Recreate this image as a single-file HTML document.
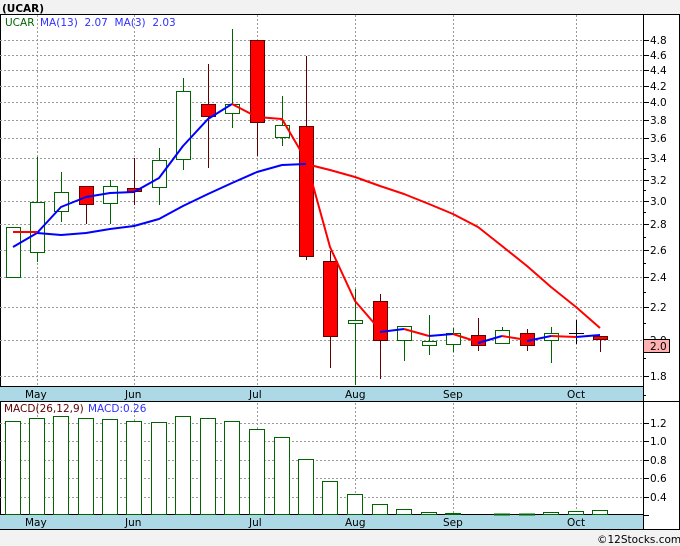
<!DOCTYPE html>
<html><head><style>
body{margin:0;width:680px;height:546px;overflow:hidden;background:#f2f2f2;font-family:"Liberation Sans","DejaVu Sans",sans-serif}
svg{display:block}
text{font-family:"DejaVu Sans","Liberation Sans",sans-serif;font-size:10.5px}
</style></head><body>
<svg width="680" height="546" viewBox="0 0 680 546">
<rect width="680" height="546" fill="#f2f2f2"/>
<text x="2" y="12" font-size="13" font-weight="bold" fill="#000">(UCAR)</text>
<rect x="0.5" y="14.5" width="679" height="515" fill="#fff" stroke="#000"/>
<line x1="0" y1="401.5" x2="680" y2="401.5" stroke="#000"/>
<line x1="643.5" y1="14" x2="643.5" y2="530" stroke="#000"/>
<g stroke="#999" stroke-dasharray="2,2" stroke-width="1">
<line x1="37.5" y1="15" x2="37.5" y2="530"/><line x1="134.5" y1="15" x2="134.5" y2="530"/><line x1="257.5" y1="15" x2="257.5" y2="530"/><line x1="355.5" y1="15" x2="355.5" y2="530"/><line x1="453.5" y1="15" x2="453.5" y2="530"/><line x1="576.5" y1="15" x2="576.5" y2="530"/>
<line x1="0" y1="40.5" x2="643" y2="40.5"/><line x1="0" y1="55.5" x2="643" y2="55.5"/><line x1="0" y1="70.5" x2="643" y2="70.5"/><line x1="0" y1="86.5" x2="643" y2="86.5"/><line x1="0" y1="102.5" x2="643" y2="102.5"/><line x1="0" y1="120.5" x2="643" y2="120.5"/><line x1="0" y1="138.5" x2="643" y2="138.5"/><line x1="0" y1="158.5" x2="643" y2="158.5"/><line x1="0" y1="180.5" x2="643" y2="180.5"/><line x1="0" y1="201.5" x2="643" y2="201.5"/><line x1="0" y1="224.5" x2="643" y2="224.5"/><line x1="0" y1="250.5" x2="643" y2="250.5"/><line x1="0" y1="277.5" x2="643" y2="277.5"/><line x1="0" y1="307.5" x2="643" y2="307.5"/><line x1="0" y1="340.5" x2="643" y2="340.5"/><line x1="0" y1="376.5" x2="643" y2="376.5"/>
<line x1="0" y1="423.5" x2="643" y2="423.5"/><line x1="0" y1="441.5" x2="643" y2="441.5"/><line x1="0" y1="460.5" x2="643" y2="460.5"/><line x1="0" y1="478.5" x2="643" y2="478.5"/><line x1="0" y1="497.5" x2="643" y2="497.5"/>
</g>
<g stroke="#000">
<line x1="643" y1="40.5" x2="649" y2="40.5"/><line x1="643" y1="55.5" x2="649" y2="55.5"/><line x1="643" y1="70.5" x2="649" y2="70.5"/><line x1="643" y1="86.5" x2="649" y2="86.5"/><line x1="643" y1="102.5" x2="649" y2="102.5"/><line x1="643" y1="120.5" x2="649" y2="120.5"/><line x1="643" y1="138.5" x2="649" y2="138.5"/><line x1="643" y1="158.5" x2="649" y2="158.5"/><line x1="643" y1="180.5" x2="649" y2="180.5"/><line x1="643" y1="201.5" x2="649" y2="201.5"/><line x1="643" y1="224.5" x2="649" y2="224.5"/><line x1="643" y1="250.5" x2="649" y2="250.5"/><line x1="643" y1="277.5" x2="649" y2="277.5"/><line x1="643" y1="307.5" x2="649" y2="307.5"/><line x1="643" y1="376.5" x2="649" y2="376.5"/>
<line x1="643" y1="423.5" x2="649" y2="423.5"/><line x1="643" y1="441.5" x2="649" y2="441.5"/><line x1="643" y1="460.5" x2="649" y2="460.5"/><line x1="643" y1="478.5" x2="649" y2="478.5"/><line x1="643" y1="497.5" x2="649" y2="497.5"/><line x1="643" y1="515.5" x2="649" y2="515.5"/>
<line x1="643" y1="169.5" x2="646" y2="169.5"/><line x1="643" y1="190.5" x2="646" y2="190.5"/><line x1="643" y1="212.5" x2="646" y2="212.5"/><line x1="643" y1="237.5" x2="646" y2="237.5"/><line x1="643" y1="263.5" x2="646" y2="263.5"/><line x1="643" y1="292.5" x2="646" y2="292.5"/><line x1="643" y1="323.5" x2="646" y2="323.5"/><line x1="643" y1="358.5" x2="646" y2="358.5"/><line x1="643" y1="395.5" x2="646" y2="395.5"/>
</g>
<g fill="#000">
<text x="650" y="44">4.8</text><text x="650" y="59">4.6</text><text x="650" y="74">4.4</text><text x="650" y="90">4.2</text><text x="650" y="106">4.0</text><text x="650" y="124">3.8</text><text x="650" y="142">3.6</text><text x="650" y="162">3.4</text><text x="650" y="184">3.2</text><text x="650" y="205">3.0</text><text x="650" y="228">2.8</text><text x="650" y="254">2.6</text><text x="650" y="281">2.4</text><text x="650" y="311">2.2</text><text x="650" y="344">2.0</text><text x="650" y="380">1.8</text>
<text x="650" y="427">1.2</text><text x="650" y="445">1.0</text><text x="650" y="464">0.8</text><text x="650" y="482">0.6</text><text x="650" y="501">0.4</text>
</g>
<rect x="643.5" y="339.5" width="26" height="13" fill="#ffb0b0" stroke="#000"/>
<text x="650" y="350" fill="#000">2.0</text>
<!-- bands -->
<rect x="0" y="387" width="643" height="14" fill="#add8e6"/><line x1="0" y1="386.5" x2="643" y2="386.5" stroke="#000"/>
<rect x="0" y="515" width="643" height="14" fill="#add8e6"/><line x1="0" y1="514.5" x2="643" y2="514.5" stroke="#000"/>
<g fill="#000"><text x="25" y="398">May</text><text x="125" y="398">Jun</text><text x="249" y="398">Jul</text><text x="345" y="398">Aug</text><text x="443" y="398">Sep</text><text x="567" y="398">Oct</text>
<text x="25" y="526">May</text><text x="125" y="526">Jun</text><text x="249" y="526">Jul</text><text x="345" y="526">Aug</text><text x="443" y="526">Sep</text><text x="567" y="526">Oct</text></g>
<text x="5" y="26" font-size="10" fill="#006400">UCAR</text><text x="40" y="26" font-size="10" fill="#3030ff">MA(13)&#160; 2.07&#160; MA(3)&#160; 2.03</text>
<text x="4" y="412" font-size="10" fill="#600000">MACD(26,12,9)</text><text x="88" y="412" font-size="10" fill="#3030ff">MACD:0.26</text>
<!-- candles -->
<g stroke-width="1">
<g stroke="#006400" fill="#fff">
<line x1="37.5" y1="157" x2="37.5" y2="262"/><line x1="61.5" y1="172" x2="61.5" y2="222"/><line x1="110.5" y1="180" x2="110.5" y2="224"/><line x1="159.5" y1="148" x2="159.5" y2="205"/><line x1="183.5" y1="78" x2="183.5" y2="170"/><line x1="232.5" y1="29" x2="232.5" y2="128"/><line x1="282.5" y1="96" x2="282.5" y2="146"/><line x1="355.5" y1="289" x2="355.5" y2="385"/><line x1="404.5" y1="326" x2="404.5" y2="361"/><line x1="429.5" y1="315" x2="429.5" y2="355"/><line x1="453.5" y1="328" x2="453.5" y2="352"/><line x1="502.5" y1="327" x2="502.5" y2="344"/><line x1="551.5" y1="327" x2="551.5" y2="363"/>
<rect x="6.5" y="227.5" width="14" height="50"/><rect x="30.5" y="202.5" width="14" height="50"/><rect x="54.5" y="192.5" width="14" height="19"/><rect x="103.5" y="186.5" width="14" height="17"/><rect x="152.5" y="160.5" width="14" height="27"/><rect x="176.5" y="91.5" width="14" height="68"/><rect x="225.5" y="104.5" width="14" height="9"/><rect x="275.5" y="125.5" width="14" height="12"/><rect x="348.5" y="320.5" width="14" height="3"/><rect x="397.5" y="326.5" width="14" height="14"/><rect x="422.5" y="341.5" width="14" height="4"/><rect x="446.5" y="333.5" width="14" height="11"/><rect x="495.5" y="330.5" width="14" height="13"/><rect x="544.5" y="333.5" width="14" height="7"/>
</g>
<g stroke="#600000" fill="#ff0000">
<line x1="86.5" y1="186" x2="86.5" y2="224"/><line x1="134.5" y1="158" x2="134.5" y2="205"/><line x1="208.5" y1="64" x2="208.5" y2="168"/><line x1="257.5" y1="40" x2="257.5" y2="156"/><line x1="306.5" y1="56" x2="306.5" y2="260"/><line x1="330.5" y1="251" x2="330.5" y2="368"/><line x1="380.5" y1="294" x2="380.5" y2="379"/><line x1="478.5" y1="318" x2="478.5" y2="351"/><line x1="527.5" y1="329" x2="527.5" y2="351"/><line x1="600.5" y1="336" x2="600.5" y2="352"/>
<rect x="79.5" y="186.5" width="14" height="18"/><rect x="127.5" y="188.5" width="14" height="3"/><rect x="201.5" y="104.5" width="14" height="12"/><rect x="250.5" y="40.5" width="14" height="82"/><rect x="299.5" y="126.5" width="14" height="130"/><rect x="323.5" y="261.5" width="14" height="75"/><rect x="373.5" y="301.5" width="14" height="39"/><rect x="471.5" y="335.5" width="14" height="10"/><rect x="520.5" y="333.5" width="14" height="12"/><rect x="593.5" y="336.5" width="14" height="3"/>
</g>
<g stroke="#000"><line x1="576.5" y1="320" x2="576.5" y2="344"/><line x1="569" y1="333.5" x2="584" y2="333.5"/></g>
</g>
<!-- MA lines -->
<g fill="none" stroke-width="2" stroke-linejoin="round">
<polyline stroke="#0000ff" points="13,247 37,233 61,207 86,197 110,193 134,192 159,178 183,146 208,119 232,104"/>
<polyline stroke="#ff0000" points="232,104 257,117 282,119 306,160 330,247 355,301 380,330"/>
<polyline stroke="#ff0000" points="13,232 37,232"/>
<polyline stroke="#0000ff" points="37,233 61,235 86,233 110,229 134,226 159,219 183,206 208,194 232,183 257,172 282,165 306,164"/>
<polyline stroke="#ff0000" points="306,164 330,170 355,177 380,186 404,194 429,204 453,214 478,227 502,246 527,266 551,287 576,307 600,328"/>
<polyline stroke="#0000ff" points="380,332 404,329"/><polyline stroke="#ff0000" points="404,329 429,336"/>
<polyline stroke="#0000ff" points="429,336 453,334"/><polyline stroke="#ff0000" points="453,334 478,342"/>
<polyline stroke="#0000ff" points="478,343 502,336"/><polyline stroke="#ff0000" points="502,336 527,340"/>
<polyline stroke="#0000ff" points="527,341 551,336"/><polyline stroke="#ff0000" points="551,336 576,337"/>
<polyline stroke="#0000ff" points="576,337 600,335"/>
</g>
<!-- MACD bars -->
<g stroke="#006400" fill="#fff">
<rect x="5.5" y="421.5" width="15" height="93"/><rect x="29.5" y="418.5" width="15" height="96"/><rect x="53.5" y="416.5" width="15" height="98"/><rect x="78.5" y="418.5" width="15" height="96"/><rect x="102.5" y="419.5" width="15" height="95"/><rect x="126.5" y="421.5" width="15" height="93"/><rect x="151.5" y="422.5" width="15" height="92"/><rect x="175.5" y="416.5" width="15" height="98"/><rect x="200.5" y="418.5" width="15" height="96"/><rect x="224.5" y="421.5" width="15" height="93"/><rect x="249.5" y="429.5" width="15" height="85"/><rect x="274.5" y="437.5" width="15" height="77"/><rect x="298.5" y="459.5" width="15" height="55"/><rect x="322.5" y="481.5" width="15" height="33"/><rect x="347.5" y="494.5" width="15" height="20"/><rect x="372.5" y="504.5" width="15" height="10"/><rect x="396.5" y="509.5" width="15" height="5"/><rect x="421.5" y="512.5" width="15" height="2"/><rect x="445.5" y="513.5" width="15" height="1"/><rect x="494.5" y="514" width="15" height="1"/><rect x="519.5" y="514" width="15" height="1"/><rect x="543.5" y="512.5" width="15" height="2"/><rect x="568.5" y="511.5" width="15" height="3"/><rect x="592.5" y="510.5" width="15" height="4"/>
</g>
<text x="597" y="543" fill="#000" font-size="11">©12Stocks.com</text>
</svg>
</body></html>
